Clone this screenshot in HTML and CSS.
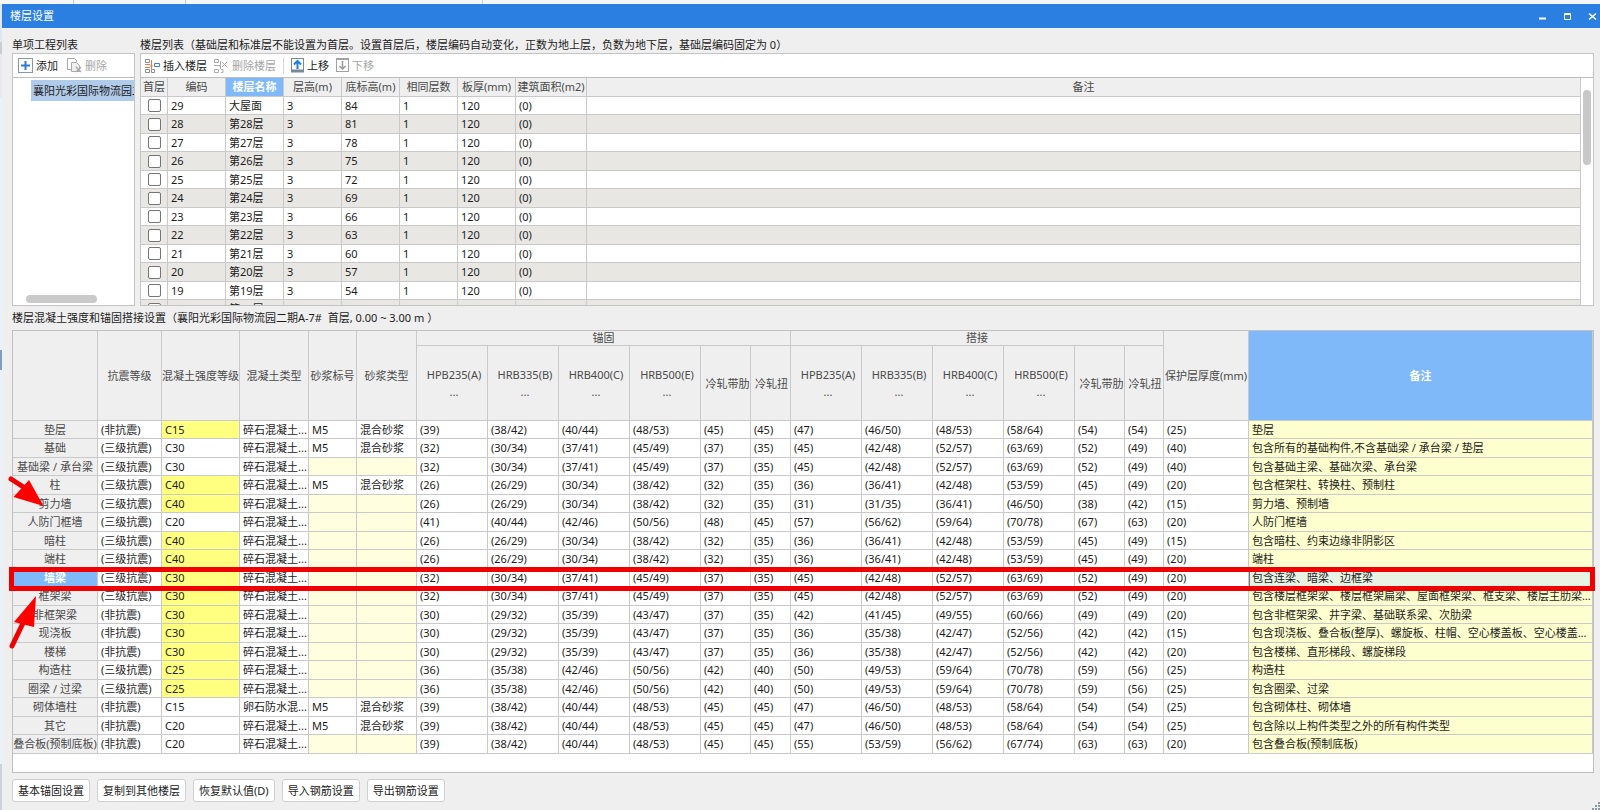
FILE: index.html
```html
<!DOCTYPE html>
<html lang="zh-CN">
<head>
<meta charset="utf-8">
<title>楼层设置</title>
<link rel="stylesheet" href="styles.css">
</head>
<body>
<div class="backdrop"><i></i><i></i><i></i></div>
<div class="stage">
<div class="edge"></div>
<main class="window">
<header class="titlebar">
  <h1>楼层设置</h1>
  <div class="controls">
    <button aria-label="最小化"><svg width="9" height="9"><path d="M1 6.5h7" stroke="#fff" stroke-width="2"/></svg></button>
    <button aria-label="最大化"><svg width="9" height="9"><path d="M1.5 1.5h6v6h-6zM1 2.5h7" fill="none" stroke="#fff"/></svg></button>
    <button aria-label="关闭"><svg width="9" height="9"><path d="M1 1.5l7 6M8 1.5l-7 6" stroke="#fff" stroke-width="1.6"/></svg></button>
  </div>
</header>
<div class="content">
<div class="upper">
  <section class="projects">
    <h2>单项工程列表</h2>
    <div class="panel">
      <div class="toolbar">
        <button><svg width="15" height="15"><rect x=".5" y=".5" width="14" height="14" fill="#fff" stroke="#8a96a6"/><path d="M7.5 3v9M3 7.5h9" stroke="#2e7cc9" stroke-width="2"/></svg>添加</button>
        <button disabled><svg width="15" height="15" fill="none" stroke="#a9a9a9"><path d="M4.500 11.500h-4v-11h7l2 2v2"/><path d="M4.500 4.500h5l3 3v6h-8z" fill="#eee"/><path d="M9 9l5 5M14 9l-5 5" stroke-width="1.500"/></svg>删除</button>
      </div>
      <div class="tree"><div class="node">襄阳光彩国际物流园二期A-7#</div><span class="hbar"></span></div>
    </div>
  </section>
  <section class="floors">
    <h2>楼层列表（基础层和标准层不能设置为首层。设置首层后，楼层编码自动变化，正数为地上层，负数为地下层，基础层编码固定为 0）</h2>
    <div class="panel">
      <div class="toolbar">
        <button><svg width="15" height="14" fill="none"><path d="M.5.5h4v3h-4zM.5 10.500h4v3h-4zM6.500 10.500h3v3h-3z" stroke="#8b8b8b"/><path d="M9.500 4.500h5v3h-5z" stroke="#3b87cf"/><path d="M0 5.500h5M0 8.500h5M5 7h3M6.500 1v9" stroke="#e07a4a"/></svg>插入楼层</button>
        <button disabled><svg width="15" height="14" fill="none" stroke="#ababab"><path d="M.5.5h4v3h-4zM.5 10.500h4v3h-4zM0 6.500h6M6.500 2v8M7 10.500h2v3h-2"/><path d="M8 3l5 5M13 3l-5 5"/></svg>删除楼层</button>
        <span class="sep"></span>
        <button><svg width="13" height="15"><rect x=".5" y=".5" width="12" height="13" fill="#fff" stroke="#7a8796"/><path d="M0 13h13" stroke="#7a8796" stroke-width="3"/><path d="M6.500 11V3M3 6.500L6.500 3 10 6.500" fill="none" stroke="#1f7fd0" stroke-width="2"/></svg>上移</button>
        <button disabled><svg width="13" height="15"><rect x=".5" y=".5" width="12" height="13" fill="#fff" stroke="#a2a2a2"/><path d="M0 1h13" stroke="#a2a2a2" stroke-width="2"/><path d="M6.500 3v8M3.500 8L6.500 11 9.500 8" fill="none" stroke="#999" stroke-width="1.500"/></svg>下移</button>
      </div>
      <div class="list">
        <div class="viewport">
        <table class="grid floor-table">
          <colgroup><col class="c27"><col class="c58" span="6"><col class="c71"><col></colgroup>
          <thead><tr><th>首层<th>编码<th class="sel">楼层名称<th>层高(m)<th>底标高(m)<th>相同层数<th>板厚(mm)<th>建筑面积(m2)<th>备注</tr></thead>
          <tbody>
          <tr><td><input type="checkbox" aria-label="首层 29"><td>29<td>大屋面<td>3<td>84<td>1<td>120<td>(0)<td></tr>
          <tr><td><input type="checkbox" aria-label="首层 28"><td>28<td>第28层<td>3<td>81<td>1<td>120<td>(0)<td></tr>
          <tr><td><input type="checkbox" aria-label="首层 27"><td>27<td>第27层<td>3<td>78<td>1<td>120<td>(0)<td></tr>
          <tr><td><input type="checkbox" aria-label="首层 26"><td>26<td>第26层<td>3<td>75<td>1<td>120<td>(0)<td></tr>
          <tr><td><input type="checkbox" aria-label="首层 25"><td>25<td>第25层<td>3<td>72<td>1<td>120<td>(0)<td></tr>
          <tr><td><input type="checkbox" aria-label="首层 24"><td>24<td>第24层<td>3<td>69<td>1<td>120<td>(0)<td></tr>
          <tr><td><input type="checkbox" aria-label="首层 23"><td>23<td>第23层<td>3<td>66<td>1<td>120<td>(0)<td></tr>
          <tr><td><input type="checkbox" aria-label="首层 22"><td>22<td>第22层<td>3<td>63<td>1<td>120<td>(0)<td></tr>
          <tr><td><input type="checkbox" aria-label="首层 21"><td>21<td>第21层<td>3<td>60<td>1<td>120<td>(0)<td></tr>
          <tr><td><input type="checkbox" aria-label="首层 20"><td>20<td>第20层<td>3<td>57<td>1<td>120<td>(0)<td></tr>
          <tr><td><input type="checkbox" aria-label="首层 19"><td>19<td>第19层<td>3<td>54<td>1<td>120<td>(0)<td></tr>
          <tr><td><input type="checkbox" aria-label="首层 18"><td>18<td>第18层<td>3<td>51<td>1<td>120<td>(0)<td></tr>
          </tbody>
        </table>
        </div>
        <div class="vbar"><span></span></div>
      </div>
    </div>
  </section>
</div>
<section class="settings">
  <h2>楼层混凝土强度和锚固搭接设置（襄阳光彩国际物流园二期A-7#&nbsp; 首层, 0.00 ~ 3.00 m ）</h2>
  <div class="frame">
  <table class="grid set-table">
    <colgroup><col class="c85"><col class="c64"><col class="c78"><col class="c69"><col class="c48"><col class="c60"><col class="c71" span="4"><col class="c50"><col class="c40"><col class="c71" span="4"><col class="c50"><col class="c39"><col class="c85"><col></colgroup>
    <thead>
    <tr class="group"><th rowspan="2"><th rowspan="2">抗震等级<th rowspan="2">混凝土强度等级<th rowspan="2">混凝土类型<th rowspan="2">砂浆标号<th rowspan="2">砂浆类型<th colspan="6">锚固<th colspan="6">搭接<th rowspan="2">保护层厚度(mm)<th rowspan="2" class="sel">备注</tr>
    <tr class="sub"><th>HPB235(A)<br>...<th>HRB335(B)<br>...<th>HRB400(C)<br>...<th>HRB500(E)<br>...<th>冷轧带肋<th>冷轧扭<th>HPB235(A)<br>...<th>HRB335(B)<br>...<th>HRB400(C)<br>...<th>HRB500(E)<br>...<th>冷轧带肋<th>冷轧扭</tr>
    </thead>
    <tbody>
    <tr><th>垫层<td>(非抗震)<td class="hi">C15<td>碎石混凝土...<td>M5<td>混合砂浆<td>(39)<td>(38/42)<td>(40/44)<td>(48/53)<td>(45)<td>(45)<td>(47)<td>(46/50)<td>(48/53)<td>(58/64)<td>(54)<td>(54)<td>(25)<td>垫层</tr>
    <tr><th>基础<td>(三级抗震)<td>C30<td>碎石混凝土...<td>M5<td>混合砂浆<td>(32)<td>(30/34)<td>(37/41)<td>(45/49)<td>(37)<td>(35)<td>(45)<td>(42/48)<td>(52/57)<td>(63/69)<td>(52)<td>(49)<td>(40)<td>包含所有的基础构件,不含基础梁 / 承台梁 / 垫层</tr>
    <tr><th>基础梁 / 承台梁<td>(三级抗震)<td>C30<td>碎石混凝土...<td class="lo"><td class="lo"><td>(32)<td>(30/34)<td>(37/41)<td>(45/49)<td>(37)<td>(35)<td>(45)<td>(42/48)<td>(52/57)<td>(63/69)<td>(52)<td>(49)<td>(40)<td>包含基础主梁、基础次梁、承台梁</tr>
    <tr><th>柱<td>(三级抗震)<td class="hi">C40<td>碎石混凝土...<td>M5<td>混合砂浆<td>(26)<td>(26/29)<td>(30/34)<td>(38/42)<td>(32)<td>(35)<td>(36)<td>(36/41)<td>(42/48)<td>(53/59)<td>(45)<td>(49)<td>(20)<td>包含框架柱、转换柱、预制柱</tr>
    <tr><th>剪力墙<td>(三级抗震)<td class="hi">C40<td>碎石混凝土...<td class="lo"><td class="lo"><td>(26)<td>(26/29)<td>(30/34)<td>(38/42)<td>(32)<td>(35)<td>(31)<td>(31/35)<td>(36/41)<td>(46/50)<td>(38)<td>(42)<td>(15)<td>剪力墙、预制墙</tr>
    <tr><th>人防门框墙<td>(三级抗震)<td>C20<td>碎石混凝土...<td class="lo"><td class="lo"><td>(41)<td>(40/44)<td>(42/46)<td>(50/56)<td>(48)<td>(45)<td>(57)<td>(56/62)<td>(59/64)<td>(70/78)<td>(67)<td>(63)<td>(20)<td>人防门框墙</tr>
    <tr><th>暗柱<td>(三级抗震)<td class="hi">C40<td>碎石混凝土...<td class="lo"><td class="lo"><td>(26)<td>(26/29)<td>(30/34)<td>(38/42)<td>(32)<td>(35)<td>(36)<td>(36/41)<td>(42/48)<td>(53/59)<td>(45)<td>(49)<td>(15)<td>包含暗柱、约束边缘非阴影区</tr>
    <tr><th>端柱<td>(三级抗震)<td class="hi">C40<td>碎石混凝土...<td class="lo"><td class="lo"><td>(26)<td>(26/29)<td>(30/34)<td>(38/42)<td>(32)<td>(35)<td>(36)<td>(36/41)<td>(42/48)<td>(53/59)<td>(45)<td>(49)<td>(20)<td>端柱</tr>
    <tr class="current"><th class="sel">墙梁<span class="marker"></span><td>(三级抗震)<td class="hi">C30<td>碎石混凝土...<td class="lo"><td class="lo"><td>(32)<td>(30/34)<td>(37/41)<td>(45/49)<td>(37)<td>(35)<td>(45)<td>(42/48)<td>(52/57)<td>(63/69)<td>(52)<td>(49)<td>(20)<td>包含连梁、暗梁、边框梁</tr>
    <tr><th>框架梁<td>(三级抗震)<td class="hi">C30<td>碎石混凝土...<td class="lo"><td class="lo"><td>(32)<td>(30/34)<td>(37/41)<td>(45/49)<td>(37)<td>(35)<td>(45)<td>(42/48)<td>(52/57)<td>(63/69)<td>(52)<td>(49)<td>(20)<td>包含楼层框架梁、楼层框架扁梁、屋面框架梁、框支梁、楼层主肋梁、...</tr>
    <tr><th>非框架梁<td>(非抗震)<td class="hi">C30<td>碎石混凝土...<td class="lo"><td class="lo"><td>(30)<td>(29/32)<td>(35/39)<td>(43/47)<td>(37)<td>(35)<td>(42)<td>(41/45)<td>(49/55)<td>(60/66)<td>(49)<td>(49)<td>(20)<td>包含非框架梁、井字梁、基础联系梁、次肋梁</tr>
    <tr><th>现浇板<td>(非抗震)<td class="hi">C30<td>碎石混凝土...<td class="lo"><td class="lo"><td>(30)<td>(29/32)<td>(35/39)<td>(43/47)<td>(37)<td>(35)<td>(36)<td>(35/38)<td>(42/47)<td>(52/56)<td>(42)<td>(42)<td>(15)<td>包含现浇板、叠合板(整厚)、螺旋板、柱帽、空心楼盖板、空心楼盖板...</tr>
    <tr><th>楼梯<td>(非抗震)<td class="hi">C30<td>碎石混凝土...<td class="lo"><td class="lo"><td>(30)<td>(29/32)<td>(35/39)<td>(43/47)<td>(37)<td>(35)<td>(36)<td>(35/38)<td>(42/47)<td>(52/56)<td>(42)<td>(42)<td>(20)<td>包含楼梯、直形梯段、螺旋梯段</tr>
    <tr><th>构造柱<td>(三级抗震)<td class="hi">C25<td>碎石混凝土...<td class="lo"><td class="lo"><td>(36)<td>(35/38)<td>(42/46)<td>(50/56)<td>(42)<td>(40)<td>(50)<td>(49/53)<td>(59/64)<td>(70/78)<td>(59)<td>(56)<td>(25)<td>构造柱</tr>
    <tr><th>圈梁 / 过梁<td>(三级抗震)<td class="hi">C25<td>碎石混凝土...<td class="lo"><td class="lo"><td>(36)<td>(35/38)<td>(42/46)<td>(50/56)<td>(42)<td>(40)<td>(50)<td>(49/53)<td>(59/64)<td>(70/78)<td>(59)<td>(56)<td>(25)<td>包含圈梁、过梁</tr>
    <tr><th>砌体墙柱<td>(非抗震)<td>C15<td>卵石防水混...<td>M5<td>混合砂浆<td>(39)<td>(38/42)<td>(40/44)<td>(48/53)<td>(45)<td>(45)<td>(47)<td>(46/50)<td>(48/53)<td>(58/64)<td>(54)<td>(54)<td>(25)<td>包含砌体柱、砌体墙</tr>
    <tr><th>其它<td>(非抗震)<td>C20<td>碎石混凝土...<td>M5<td>混合砂浆<td>(39)<td>(38/42)<td>(40/44)<td>(48/53)<td>(45)<td>(45)<td>(47)<td>(46/50)<td>(48/53)<td>(58/64)<td>(54)<td>(54)<td>(25)<td>包含除以上构件类型之外的所有构件类型</tr>
    <tr><th>叠合板(预制底板)<td>(非抗震)<td>C20<td>碎石混凝土...<td class="lo"><td class="lo"><td>(39)<td>(38/42)<td>(40/44)<td>(48/53)<td>(45)<td>(45)<td>(55)<td>(53/59)<td>(56/62)<td>(67/74)<td>(63)<td>(63)<td>(20)<td>包含叠合板(预制底板)</tr>
    </tbody>
  </table>
  <svg class="arrows" width="40" height="176" viewBox="8 474 40 176" fill="#ff0000" stroke="#f00000" stroke-width="5" stroke-linecap="round">
    <path d="M11 479l14 9M12 646l13-27"/>
    <path stroke="none" d="M29 480l14.500 26L13.500 497zM36 596l-2 31-20-5z"/>
  </svg>
  </div>
</section>
<footer class="actions">
  <button>基本锚固设置</button><button>复制到其他楼层</button><button>恢复默认值(D)</button><button>导入钢筋设置</button><button>导出钢筋设置</button>
</footer>
</div>
<svg class="grip" width="8" height="8" fill="#8a98a4"><path d="M6 0h2v2H6zM3 3h2v2H3zM6 3h2v2H6zM0 6h2v2H0zM3 6h2v2H3zM6 6h2v2H6z"/></svg>
</main>
</div>
</body>
</html>
```
FILE: styles.css
```css
* { box-sizing: border-box; }
body {
  margin: 0;
  min-height: 100vh;
  display: flex;
  flex-direction: column;
  background: #efefef;
  color: #1c1c1c;
  font: 11px/16px "Noto Sans", "Noto Sans CJK SC", sans-serif;
}
h1, h2 { margin: 0; font-size: 11px; font-weight: 400; white-space: nowrap; }
button { font: inherit; color: inherit; margin: 0; white-space: nowrap; }

.backdrop { display: flex; height: 4px; background: #f4f6fa; }
.backdrop i { width: 112px; border-right: 1px solid #c3c9d2; }
.backdrop i:first-child { width: 74px; }
.backdrop i:last-child { width: 297px; }

.stage { flex: 1; display: flex; }
.edge {
  width: 2px;
  background: linear-gradient(#dfe7f3 0 38px, #c9cdd2 38px 50px, #e6e9ee 50px 94px, #e9f1fb 94px 346px, #7f9cc4 346px 366px, #e9f1fb 366px 760px, #cdd2da 760px);
}
.window { flex: 1; min-width: 0; display: flex; flex-direction: column; position: relative; }
.titlebar {
  display: flex;
  align-items: center;
  justify-content: space-between;
  height: 24px;
  padding: 0 3px 0 8px;
  background: #2b7fe0;
  color: #fff;
}
.controls { display: flex; gap: 16px; }
.controls button { display: flex; padding: 0; border: 0; background: none; }

.content { flex: 1; display: flex; flex-direction: column; padding: 9px 6px 8px 10px; }
.content h2 { line-height: 16px; }
.upper { display: flex; gap: 5px; height: 269px; }
.projects { width: 123px; display: flex; flex-direction: column; }
.floors { flex: 1; min-width: 0; display: flex; flex-direction: column; }
.panel {
  flex: 1;
  min-height: 0;
  display: flex;
  flex-direction: column;
  border: 1px solid #c4c4c4;
  background: #fff;
}
.toolbar { display: flex; align-items: center; gap: 9px; height: 24px; padding: 0 5px; border-bottom: 1px solid #bdbdbd; }
.toolbar button { display: flex; align-items: center; gap: 3px; padding: 0; border: 0; background: none; }
.toolbar button:disabled { color: #a6a6a6; }
.sep { width: 1px; height: 16px; background: #d8d8d8; }
.floors .toolbar { gap: 7px; padding: 0 4px; }

.tree { flex: 1; position: relative; overflow: hidden; padding: 2px 0 0 18px; }
.node { padding: 2px; line-height: 17px; background: #b1cbeb; white-space: nowrap; overflow: hidden; }
.hbar { position: absolute; left: 13px; bottom: 2px; width: 71px; height: 8px; border-radius: 4px; background: #cacaca; }

.list { flex: 1; min-height: 0; display: flex; }
.viewport { flex: 1; min-width: 0; overflow: hidden; }
.vbar { width: 12px; padding: 12px 2px 0 2px; }
.vbar span { display: block; height: 75px; border-radius: 4px; background: #c8c8c8; }

.grid { width: 100%; table-layout: fixed; border-collapse: separate; border-spacing: 0; }
.grid th, .grid td {
  height: 18px;
  padding: 0;
  border: solid #c9c9c9;
  border-width: 0 1px 1px 0;
  line-height: 16px;
  white-space: nowrap;
  overflow: hidden;
}
.grid th { background: #efefef; color: #4a4a4a; font-weight: 400; text-align: center; }
.grid td { padding-left: 3px; background: #fff; }
.grid tbody tr:nth-child(even) > * { height: 19px; }
.grid th.sel { background: #80b9fa; color: #fff; font-weight: 700; }
.floor-table thead th { height: 19px; }
.floor-table tbody tr:nth-child(even) td { background: #e8e7e4; }
.floor-table td:first-child { padding: 0; }
.floor-table input {
  appearance: none;
  display: block;
  width: 13px;
  height: 13px;
  margin: 0 auto;
  border: 1px solid #757575;
  border-radius: 2px;
  background: #fff;
}

.c27 { width: 27px; } .c39 { width: 39px; } .c40 { width: 40px; } .c48 { width: 48px; }
.c50 { width: 50px; } .c58 { width: 58px; } .c60 { width: 60px; } .c64 { width: 64px; }
.c69 { width: 69px; } .c71 { width: 71px; } .c78 { width: 78px; } .c85 { width: 85px; }

.settings { flex: 1; display: flex; flex-direction: column; padding-top: 4px; }
.frame { flex: 1; position: relative; margin-top: 4px; border: 1px solid #c0c0c0; background: #fff; }
.set-table .group th { height: 15px; line-height: 14px; }
.set-table .sub th { height: 75px; padding-left: 4px; line-height: 17px; }
.set-table .sub th:nth-child(6n) { padding-left: 2px; }
.set-table td:last-child { background: #feffce; text-overflow: ellipsis; }
.set-table td.hi { background: #ffff80; }
.set-table td.lo { background: #ffffe0; }
.set-table .current { position: relative; }
.set-table .current td:last-child { background: #e8f3e4; border-left: 1px solid #777; padding-left: 2px; }
.set-table .current th { overflow: visible; }
.marker { position: absolute; inset: -2px -2px -4px -4px; border: 5px solid #f00000; }
.arrows { position: absolute; left: -5px; top: 143px; }

.actions { display: flex; gap: 7px; padding-top: 6px; }
.actions button {
  height: 23px;
  padding: 0 5px;
  border: 1px solid #cfcfcf;
  border-radius: 3px;
  background: #fff;
}
.grip { position: absolute; right: 0; bottom: 0; }
```
